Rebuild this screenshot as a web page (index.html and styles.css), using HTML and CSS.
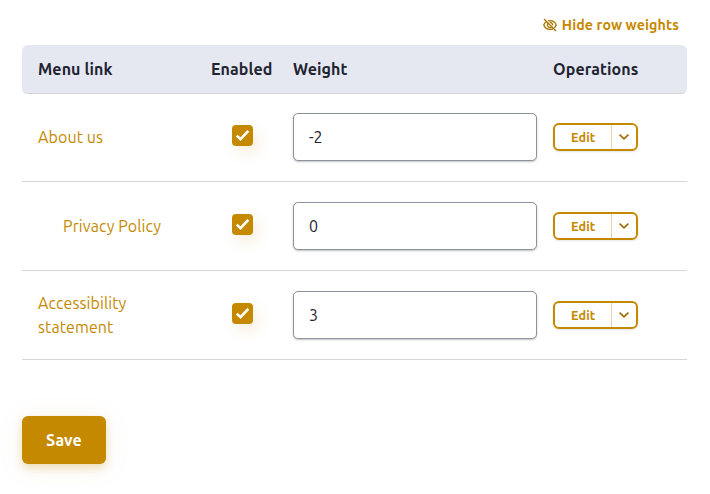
FILE: index.html
```html
<!DOCTYPE html>
<html lang="en">
<head>
<meta charset="utf-8">
<title>Menu links</title>
<link rel="stylesheet" href="styles.css">
</head>
<body>
<svg class="defs" aria-hidden="true">
  <symbol id="check" viewBox="0 0 21 21"><path d="M4.700 10.600 8.500 14.200 16.300 5.800" fill="none" stroke="#fff" stroke-width="2.600"/></symbol>
  <symbol id="chevron" viewBox="0 0 12 8"><path d="M1.600 1.600 6 5.900 10.400 1.600" fill="none" stroke="#a06f00" stroke-width="1.700"/></symbol>
</svg>
<main class="page">
  <div class="toolbar">
    <button class="toggle" type="button">
      <svg class="eye" viewBox="0 0 14 14" fill="none" stroke="currentColor" stroke-width="1.350"><path d="M3.200 3.800C2 4.600 1.200 5.800.8 7c.9 2.700 3.300 4.400 6.200 4.400 1 0 2-.2 2.900-.6M5 2.900c.6-.2 1.300-.3 2-.3 2.900 0 5.300 1.700 6.200 4.400-.4 1.100-1 2-1.900 2.800M4.700 5.600a2.700 2.700 0 0 0 3.600 3.700M6.600 4.400a2.700 2.700 0 0 1 3 3M1 1l12 12"/></svg>
      <span>Hide row weights</span>
    </button>
  </div>
  <div class="table">
    <div class="row head">
      <span>Menu link</span><span class="center">Enabled</span><span>Weight</span><span>Operations</span>
    </div>
    <div class="row first">
      <a class="link">About us</a>
      <span class="center"><svg class="checkbox"><use href="#check"/></svg></span>
      <input class="field" value="-2">
      <span class="dropbutton"><span class="edit">Edit</span><span class="more"><svg class="chevron"><use href="#chevron"/></svg></span></span>
    </div>
    <div class="row">
      <a class="link child">Privacy Policy</a>
      <span class="center"><svg class="checkbox"><use href="#check"/></svg></span>
      <input class="field" value="0">
      <span class="dropbutton"><span class="edit">Edit</span><span class="more"><svg class="chevron"><use href="#chevron"/></svg></span></span>
    </div>
    <div class="row">
      <a class="link">Accessibility<br>statement</a>
      <span class="center"><svg class="checkbox"><use href="#check"/></svg></span>
      <input class="field" value="3">
      <span class="dropbutton"><span class="edit">Edit</span><span class="more"><svg class="chevron"><use href="#chevron"/></svg></span></span>
    </div>
  </div>
  <button class="save" type="button">Save</button>
</main>
</body>
</html>
```
FILE: styles.css
```css
* { box-sizing: border-box; }
body { margin: 0; background: #fff; color: #222330; font: 16px/24px Ubuntu, "Noto Sans", sans-serif; letter-spacing: .1px; }
button { border: 0; font: inherit; letter-spacing: inherit; }
.defs { display: none; }
.page { min-height: 494px; padding: 13px 23px 0 22px; }
.toolbar { display: flex; justify-content: flex-end; height: 32px; padding-right: 8px; }
.toggle { display: flex; align-items: center; gap: 5px; height: 24px; padding: 0; background: none; color: #c58900; font-size: 14.22px; font-weight: 700; white-space: nowrap; }
.eye { width: 14px; height: 14px; color: #a97800; }
.row { display: grid; grid-template-columns: 173px 82px 260px 1fr; align-items: center; height: 89px; padding-left: 16px; border-bottom: 1px solid #d5d6d8; }
.head { height: 49px; border-radius: 6px; background: #e5e8f0; font-weight: 700; }
.first { height: 88px; padding-bottom: 1px; }
.head > span { white-space: nowrap; }
.center { width: 62px; }
.link { color: #c58900; }
.child { padding-left: 25px; }
.checkbox { display: block; width: 21px; height: 21px; margin: -4px auto 0; border-radius: 4px; background: #c58900; box-shadow: 4px 6px 14px rgba(197,137,0,.15); }
.field { width: 244px; height: 48px; padding: 0 15px; border: 1px solid #8e929c; border-radius: 5px; background: #fff; box-shadow: 0 1px 2px rgba(34,35,48,.28); color: #222330; font: inherit; outline: 0; }
.dropbutton { display: flex; width: 85px; height: 28px; border: 2px solid #c58900; border-radius: 6px; box-shadow: 0 1px 2px rgba(34,35,48,.12); }
.edit { width: 57px; padding-left: 16px; border-right: 1px solid #e8d4a5; color: #c58900; font-size: 12.64px; font-weight: 700; line-height: 24px; }
.more { display: flex; flex: 1; align-items: center; justify-content: center; }
.chevron { width: 12px; height: 8px; }
.save { display: block; width: 84px; height: 48px; margin-top: 56px; padding: 0; border-radius: 6px; background: #c58900; color: #fff; font-weight: 700; box-shadow: 0 4px 8px rgba(197,137,0,.24), 0 3px 26px rgba(197,137,0,.1); }
```
